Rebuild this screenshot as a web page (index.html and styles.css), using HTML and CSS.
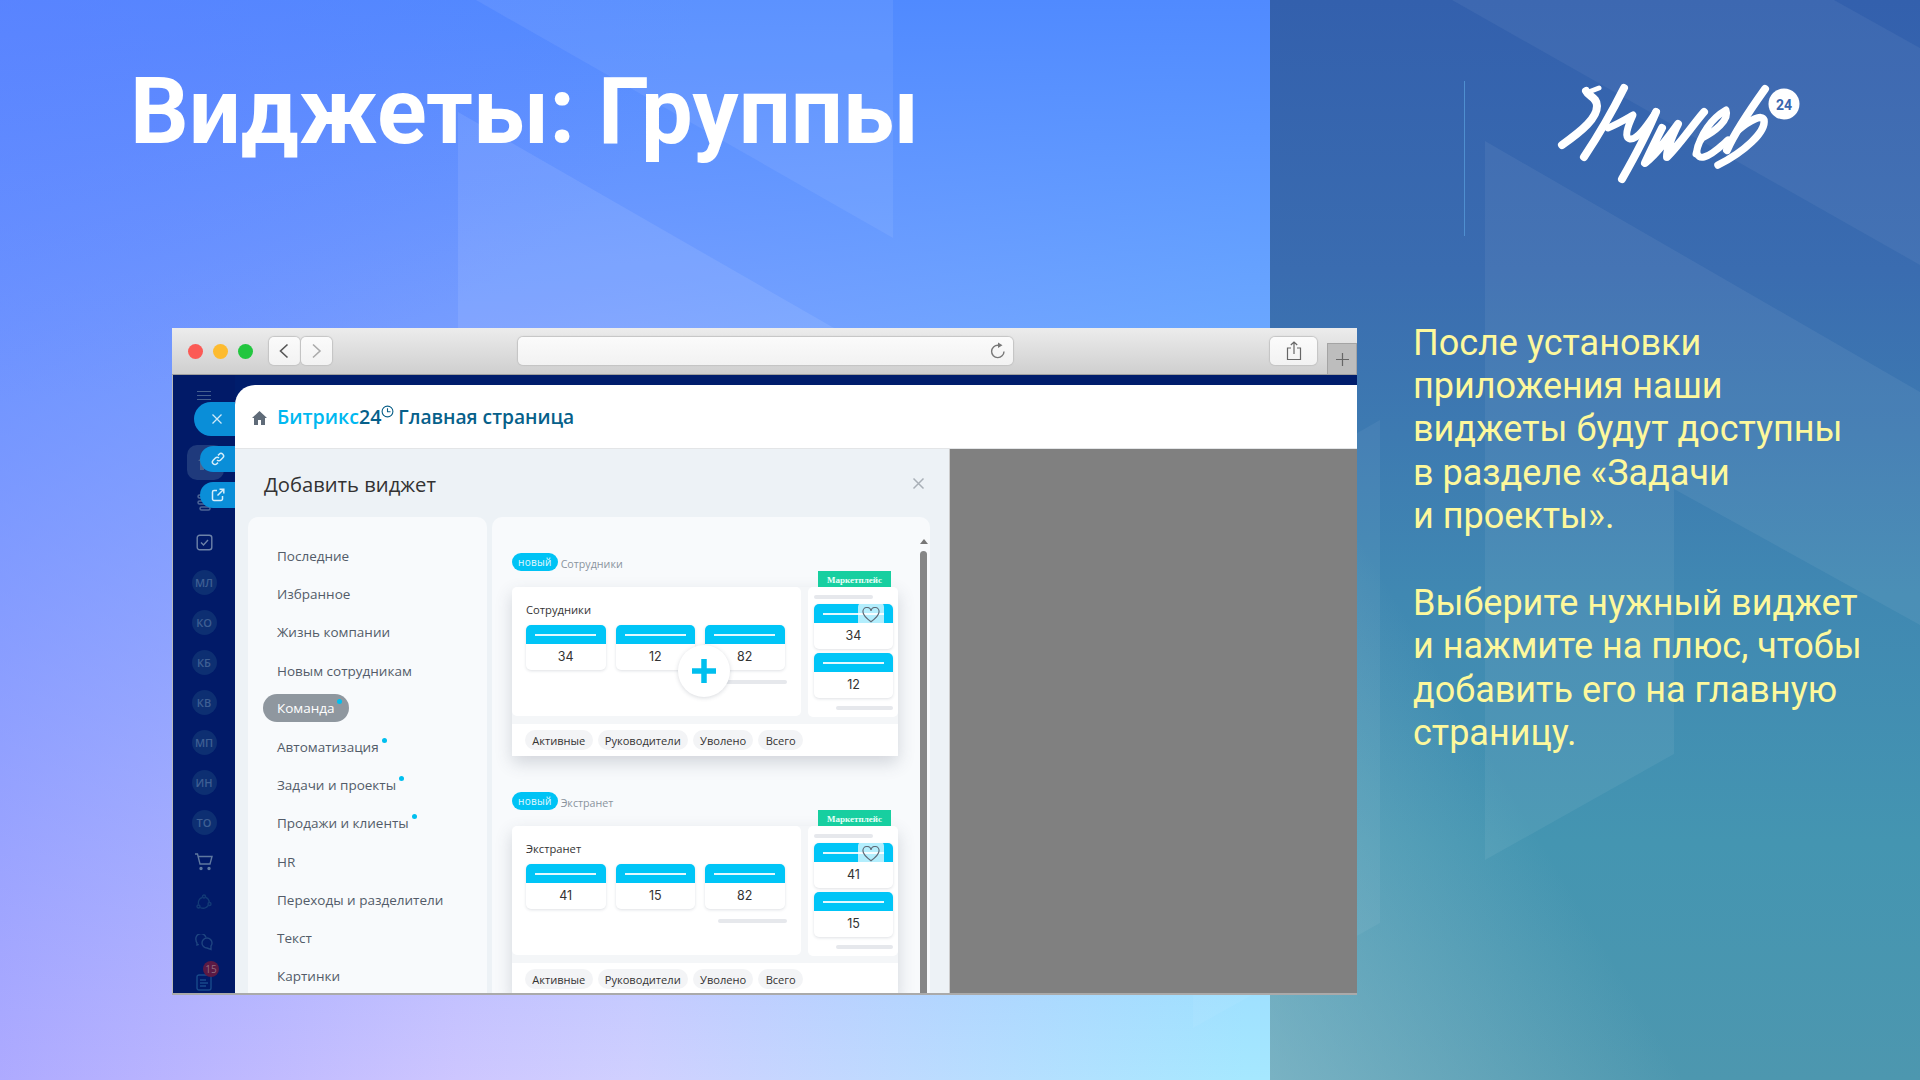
FILE: index.html
```html
<!DOCTYPE html>
<html lang="ru">
<head>
  <meta charset="utf-8">
  <title>Виджеты: Группы</title>
  <link rel="stylesheet" href="styles.css">
</head>
<body>
<div class="slide">

  <svg class="shapes" width="1920" height="1080" viewBox="0 0 1920 1080">
    <polygon points="476,0 893,0 893,238" fill="#fff" opacity=".07"/>
    <polygon points="458,112 834,328 458,328" fill="#fff" opacity=".09"/>
    <polygon points="1193,527 1380,420 1380,923 1193,1028" fill="#fff" opacity=".05"/>
    <polygon points="1452,0 1834,0 1920,48 1920,265" fill="#fff" opacity=".05"/>
    <polygon points="1485,141 1920,392 1920,625 1674,489 1674,754 1485,860" fill="#fff" opacity=".06"/>
  </svg>

  <section class="left">
    <h1 class="title">Виджеты: Группы</h1>

    <div class="browser">
      <div class="toolbar">
        <div class="lights">
          <span class="light red"></span>
          <span class="light yellow"></span>
          <span class="light green"></span>
        </div>
        <div class="nav-btns">
          <span class="tbtn nav-btn">
            <svg width="12" height="16" viewBox="0 0 12 16"><path d="M8.500 1.500 1.500 8l7 6.500" fill="none" stroke="#555" stroke-width="1.6"/></svg>
          </span>
          <span class="tbtn nav-btn">
            <svg width="12" height="16" viewBox="0 0 12 16"><path d="m2 1.5 7 6.5-7 6.5" fill="none" stroke="#aaa" stroke-width="1.6"/></svg>
          </span>
        </div>
        <div class="tbtn address">
          <svg width="18" height="18" viewBox="0 0 18 18"><path d="M9 3.200A6.200 6.200 0 1 0 15 9.500" fill="none" stroke="#777" stroke-width="1.4"/><path d="M9 0.500 13.500 3.200 9 6z" fill="#777"/></svg>
        </div>
        <div class="tbtn share-btn">
          <svg width="16" height="20" viewBox="0 0 16 20"><path d="M5 7H1.5v11.5h13V7H11M8 13V1M4.8 4 8 1l3.2 3" fill="none" stroke="#666" stroke-width="1.2"/></svg>
        </div>
        <div class="new-tab">
          <svg width="15" height="15" viewBox="0 0 15 15"><path d="M7.500 1v13M1 7.500h13" stroke="#666" stroke-width="1.2"/></svg>
        </div>
      </div>

      <div class="app">
        <aside class="sidebar">
          <div class="burger"><i></i><i></i><i></i></div>
          <div class="side-item">
            <span class="home-tile">
              <svg width="16" height="18" viewBox="0 0 16 18"><path d="M8 1 1 8h2v9h4v-5h2v5h4V8h2z" fill="#4a628f"/></svg>
            </span>
          </div>
          <div class="side-item">
            <svg width="16" height="20" viewBox="0 0 16 20" fill="none" stroke="#4d6596" stroke-width="1.5"><rect x="2" y="3" width="10" height="3" rx="1.500"/><rect x="2" y="9" width="10" height="3" rx="1.500"/><rect x="4" y="15" width="10" height="3" rx="1.500"/></svg>
          </div>
          <div class="side-item">
            <svg width="17" height="17" viewBox="0 0 17 17" fill="none" stroke="#6d82a8" stroke-width="1.4"><rect x="1.200" y="1.200" width="14.600" height="14.600" rx="2.500"/><path d="m5 8.500 2.500 2.500 4.500-5"/></svg>
          </div>
          <div class="side-item"><span class="avatar">МЛ</span></div>
          <div class="side-item"><span class="avatar">КО</span></div>
          <div class="side-item"><span class="avatar">КБ</span></div>
          <div class="side-item"><span class="avatar">КВ</span></div>
          <div class="side-item"><span class="avatar">МП</span></div>
          <div class="side-item"><span class="avatar">ИН</span></div>
          <div class="side-item"><span class="avatar">ТО</span></div>
          <div class="side-item">
            <svg width="20" height="18" viewBox="0 0 20 18" fill="none" stroke="#5f789f" stroke-width="1.4"><path d="M1 1h2.500l2.500 10h10l2-7.500H4.200"/><circle cx="7" cy="15.500" r="1" fill="#5f789f"/><circle cx="15" cy="15.500" r="1" fill="#5f789f"/></svg>
          </div>
          <div class="side-item">
            <svg width="16" height="16" viewBox="0 0 16 16" fill="none" stroke="#123a76" stroke-width="1.400"><circle cx="8" cy="2.500" r="1.500"/><circle cx="2.500" cy="12.500" r="1.500"/><circle cx="13.500" cy="10" r="1.500"/><path d="M6 3.500a6 6 0 0 0-3.500 7M9.500 3.200a6 6 0 0 1 3.800 5M4.200 13.500a6 6 0 0 0 8-2"/></svg>
          </div>
          <div class="side-item">
            <svg width="18" height="17" viewBox="0 0 18 17" fill="none" stroke="#1e4480" stroke-width="1.400"><path d="M11 3.500A5 5 0 0 0 1 6c0 1 .3 2 1 3v2l1.800-.7"/><path d="M17 9a5 5 0 1 0-5 5l4 1.500V12a5 5 0 0 0 1-3z"/></svg>
          </div>
          <div class="side-item">
            <span class="doc">
              <svg width="16" height="17" viewBox="0 0 16 17" fill="none" stroke="#184a8a" stroke-width="1.400"><rect x="1" y="1" width="14" height="15" rx="2"/><path d="M4 6h6M4 9h8M4 12h6"/></svg>
              <b class="doc-count">15</b>
            </span>
          </div>

          <span class="pill-btn pill-close">
            <svg width="12" height="12" viewBox="0 0 12 12"><path d="m1.500 1.500 9 9m0-9-9 9" stroke="#cfe9f8" stroke-width="1.300"/></svg>
          </span>
          <span class="pill-btn pill-link">
            <svg width="14" height="14" viewBox="0 0 14 14" fill="none" stroke="#d6eefa" stroke-width="1.500"><path d="M6 8a2.500 2.500 0 0 0 3.600 0l2.200-2.200A2.500 2.500 0 0 0 8.200 2.200L7 3.400"/><path d="M8 6a2.500 2.500 0 0 0-3.600 0L2.200 8.200a2.500 2.500 0 0 0 3.600 3.600L7 10.600"/></svg>
          </span>
          <span class="pill-btn pill-ext">
            <svg width="14" height="14" viewBox="0 0 14 14" fill="none" stroke="#d6eefa" stroke-width="1.500"><path d="M6 2.500H3A1.500 1.500 0 0 0 1.500 4v7A1.500 1.500 0 0 0 3 12.500h7a1.500 1.500 0 0 0 1.500-1.500V8"/><path d="M6.500 7.500 12.500 1.500M8.500 1.200h4.300v4.300"/></svg>
          </span>
        </aside>

        <div class="page">
          <header class="page-head">
            <svg class="home" width="15" height="14" viewBox="0 0 15 14"><path d="M7.500 0 0 7h2v7h4V9h3v5h4V7h2z" fill="#5f6b78"/></svg>
            <span class="brand">Битрикс<em>24</em></span>
            <svg class="brand-clock" width="13" height="13" viewBox="0 0 13 13" fill="none" stroke="#0a5f88" stroke-width="1.100"><circle cx="6.500" cy="6.500" r="5.400"/><path d="M6.500 3.200v3.500H9.500"/></svg>
            <span class="page-name">Главная страница</span>
          </header>

          <div class="page-body">
            <div class="dialog">
              <div class="dialog-head">
                <h2>Добавить виджет</h2>
                <svg width="13" height="13" viewBox="0 0 13 13"><path d="m1.500 1.500 10 10m0-10-10 10" stroke="#a9b0b7" stroke-width="1.500"/></svg>
              </div>
              <div class="dialog-cols">
                <ul class="cats">
                  <li>Последние</li>
                  <li>Избранное</li>
                  <li>Жизнь компании</li>
                  <li>Новым сотрудникам</li>
                  <li><span class="cat-active">Команда<i class="dot"></i></span></li>
                  <li>Автоматизация<i class="dot"></i></li>
                  <li>Задачи и проекты<i class="dot"></i></li>
                  <li>Продажи и клиенты<i class="dot"></i></li>
                  <li>HR</li>
                  <li>Переходы и разделители</li>
                  <li>Текст</li>
                  <li>Картинки</li>
                </ul>

                <div class="catalog">
                  <div class="widgets">

                    <article class="widget">
                      <div class="widget-label"><span class="badge">новый</span>Сотрудники</div>
                      <div class="market-row"><span class="market">Маркетплейс</span></div>
                      <div class="widget-box">
                        <div class="widget-top">
                          <div class="w-main">
                            <div class="w-title">Сотрудники</div>
                            <div class="tiles">
                              <div class="tile"><div class="tile-head"><i></i></div><div class="tile-num">34</div></div>
                              <div class="tile"><div class="tile-head"><i></i></div><div class="tile-num">12</div></div>
                              <div class="tile"><div class="tile-head"><i></i></div><div class="tile-num">82</div></div>
                            </div>
                            <div class="bar bar-main"></div>
                            <span class="add-btn">
                              <svg width="26" height="26" viewBox="0 0 26 26"><path d="M13 1v24M1 13h24" stroke="#00bfee" stroke-width="5.500"/></svg>
                            </span>
                          </div>
                          <div class="w-side">
                            <div class="bar bar-side-top"></div>
                            <div class="tile"><div class="tile-head"><i></i></div><div class="tile-num">34</div></div>
                            <div class="tile"><div class="tile-head"><i></i></div><div class="tile-num">12</div></div>
                            <div class="bar bar-side"></div>
                            <span class="fav">
                              <svg width="18" height="16" viewBox="0 0 18 16"><path d="M9 14.800C4 11 1 8.300 1 5a4 4 0 0 1 8-1 4 4 0 0 1 8 1c0 3.300-3 6-8 9.800z" fill="none" stroke="#5f6b78" stroke-width="1.200"/></svg>
                            </span>
                          </div>
                        </div>
                        <div class="widget-foot">
                          <span>Активные</span><span>Руководители</span><span>Уволено</span><span>Всего</span>
                        </div>
                      </div>
                    </article>

                    <article class="widget">
                      <div class="widget-label"><span class="badge">новый</span>Экстранет</div>
                      <div class="market-row"><span class="market">Маркетплейс</span></div>
                      <div class="widget-box">
                        <div class="widget-top">
                          <div class="w-main">
                            <div class="w-title">Экстранет</div>
                            <div class="tiles">
                              <div class="tile"><div class="tile-head"><i></i></div><div class="tile-num">41</div></div>
                              <div class="tile"><div class="tile-head"><i></i></div><div class="tile-num">15</div></div>
                              <div class="tile"><div class="tile-head"><i></i></div><div class="tile-num">82</div></div>
                            </div>
                            <div class="bar bar-main bar-long"></div>
                          </div>
                          <div class="w-side">
                            <div class="bar bar-side-top"></div>
                            <div class="tile"><div class="tile-head"><i></i></div><div class="tile-num">41</div></div>
                            <div class="tile"><div class="tile-head"><i></i></div><div class="tile-num">15</div></div>
                            <div class="bar bar-side"></div>
                            <span class="fav">
                              <svg width="18" height="16" viewBox="0 0 18 16"><path d="M9 14.800C4 11 1 8.300 1 5a4 4 0 0 1 8-1 4 4 0 0 1 8 1c0 3.300-3 6-8 9.800z" fill="none" stroke="#5f6b78" stroke-width="1.200"/></svg>
                            </span>
                          </div>
                        </div>
                        <div class="widget-foot">
                          <span>Активные</span><span>Руководители</span><span>Уволено</span><span>Всего</span>
                        </div>
                      </div>
                    </article>

                  </div>
                  <div class="scroll"><i class="scroll-up"></i><i class="scroll-thumb"></i></div>
                </div>
              </div>
            </div>
            <div class="overlay"></div>
          </div>
        </div>
      </div>
    </div>
  </section>

  <section class="right">
    <div class="right-head">
      <span class="divider"></span>
      <svg class="logo" width="250" height="110" viewBox="115 20 250 110" fill="none" stroke="#fff" stroke-linecap="round" stroke-linejoin="round">
        <path d="M146 31C149 37 157 37 157 46C157 58 143 70 122 85" stroke-width="8"/>
        <path d="M146 33L159 28" stroke-width="5"/>
        <path d="M184 28C172 52 158 76 144 97" stroke-width="8"/>
        <path d="M168 68C178 64 186 59 193 55C187 68 184 78 190 79C198 80 208 64 216 52" stroke-width="7"/>
        <path d="M216 52C206 76 194 98 182 119" stroke-width="8"/>
        <path d="M222 68C216 80 210 92 205 103C218 92 228 78 238 64C232 76 227 88 227 97C240 84 252 66 264 52" stroke-width="8"/>
        <path d="M256 94C260 74 272 58 286 50C290 60 274 72 262 78C254 90 256 99 264 97C272 95 280 87 288 80" stroke-width="7"/>
        <path d="M325 29C310 50 296 70 287 90" stroke-width="8"/>
        <path d="M298 70C310 60 322 54 324 60C326 72 304 92 278 105" stroke-width="7.500"/>
        <circle cx="344" cy="44" r="15.500" fill="#fff" stroke="none"/>
        <text x="344" y="49.500" class="logo-24" text-anchor="middle">24</text>
      </svg>
    </div>
    <div class="about">
      <p>После установки<br>приложения наши<br>виджеты будут доступны<br>в разделе «Задачи<br>и проекты».</p>
      <p>Выберите нужный виджет<br>и нажмите на плюс, чтобы<br>добавить его на главную<br>страницу.</p>
    </div>
  </section>

</div>
</body>
</html>
```

FILE: styles.css
```css
html, body { margin: 0; padding: 0; }
body { width: 1920px; height: 1080px; overflow: hidden; font-family: "Open Sans", sans-serif; }
h1, h2, p, ul { margin: 0; padding: 0; }
ul { list-style: none; }
i, em { font-style: normal; }

.slide { position: relative; display: flex; width: 1920px; height: 1080px; overflow: hidden; }
.shapes { position: absolute; left: 0; top: 0; z-index: 1; }

/* left part */
.left {
  width: 1270px; flex: none; box-sizing: border-box; padding: 53px 0 0 130px;
  background:
    radial-gradient(700px 400px at 0 0, rgba(105,120,255,.35), rgba(105,120,255,0)),
    linear-gradient(180deg, #508aff 0%, rgba(80,138,255,0) 100%),
    linear-gradient(90deg, #aeaaff 0%, #cdc6ff 36%, #d0d0ff 50%, #a6e8ff 98%);
}
.title {
  position: relative; z-index: 2; height: 118px; margin-bottom: 157px;
  font: 700 92px/118px Roboto, sans-serif; color: #fff; white-space: nowrap;
}

/* browser window */
.browser {
  position: relative; z-index: 3; display: flex; flex-direction: column;
  width: 1185px; height: 667px; margin-left: 42px; overflow: hidden;
  border-bottom: 2px solid #aaa; box-sizing: border-box;
}
.toolbar {
  display: flex; align-items: flex-start; flex: none; height: 47px; box-sizing: border-box;
  padding: 9px 0 0 16px; background: linear-gradient(#ececec, #cfcfcf); border-bottom: 1px solid #9f9f9f;
}
.lights { display: flex; gap: 10px; padding-top: 7px; margin-right: 16px; }
.light { width: 15px; height: 15px; border-radius: 50%; }
.red { background: #fb5a55; }
.yellow { background: #fdbb2f; }
.green { background: #22c63f; }
.tbtn {
  display: flex; align-items: center; justify-content: center; box-sizing: border-box; height: 28px;
  background: linear-gradient(#fbfbfb, #f2f2f2); border-radius: 5px; box-shadow: 0 0 1px 1px #c4c4c4;
}
.nav-btns { display: flex; gap: 1px; margin-right: 186px; }
.nav-btn { width: 31px; }
.address { width: 496px; justify-content: flex-end; padding-right: 6px; margin-right: 257px; }
.share-btn { width: 47px; margin-right: 10px; }
.new-tab {
  display: flex; align-items: center; justify-content: center; width: 30px; height: 31px; margin-top: 6px;
  box-sizing: border-box; background: #bdbdbd; border: 1px solid #a4a4a4; border-bottom: 0;
}

.app { position: relative; display: flex; flex: 1; min-height: 0; background: #001d6c; border-left: 1px solid #b9b9b9; }

/* dark sidebar */
.sidebar { position: relative; width: 62px; flex: none; padding-top: 2px; background: #011a68; }
.burger { display: flex; flex-direction: column; gap: 3px; width: 14px; height: 40px; margin: 0 auto 25px; padding-top: 14px; box-sizing: border-box; }
.burger i { height: 1px; background: #46608f; }
.side-item { display: flex; align-items: center; justify-content: center; height: 40px; }
.home-tile { display: flex; align-items: center; justify-content: center; width: 37px; height: 35px; margin-left: 2px; border-radius: 10px; background: #1f3a7c; }
.avatar {
  width: 25px; height: 25px; border-radius: 50%; background: #0d2f72; color: #3f5f94;
  font: 600 11px/25px "Open Sans", sans-serif; text-align: center;
}
.doc { position: relative; display: block; width: 16px; height: 17px; }
.doc-count {
  position: absolute; left: 7px; top: -13px; width: 16px; height: 16px; border-radius: 50%;
  background: #5b1a44; color: #8f6a80; font: 400 10px/16px "Open Sans", sans-serif; text-align: center;
}
.pill-btn { position: absolute; right: 0; display: flex; align-items: center; justify-content: center; background: #0a8ed8; border-radius: 17px 0 0 17px; }
.pill-close { top: 27px; width: 41px; height: 34px; box-sizing: border-box; padding-left: 5px; }
.pill-link { top: 71px; width: 35px; height: 26px; }
.pill-ext { top: 107px; width: 35px; height: 26px; }

/* page */
.page { flex: 1; display: flex; flex-direction: column; min-width: 0; margin-top: 10px; background: #fff; border-radius: 20px 0 0 0; overflow: hidden; }
.page-head {
  display: flex; align-items: center; flex: none; height: 64px; box-sizing: border-box; padding: 0 0 0 17px;
  border-bottom: 1px solid #e3e5e7; font: 600 19.200px "Open Sans", sans-serif; color: #06608a;
}
.home { margin-right: 10px; margin-top: 2px; }
.brand { color: #00b8f0; font-size: 19.600px; }
.brand em { color: #06608a; }
.brand-clock { margin: -10px 4px 0 0; }

.page-body { flex: 1; display: flex; min-height: 0; }
.overlay { flex: 1; background: #808080; border-left: 1px solid #ccc; }

/* dialog */
.dialog { display: flex; flex-direction: column; width: 714px; flex: none; background: #edf2f6; }
.dialog-head { display: flex; align-items: center; justify-content: space-between; flex: none; height: 68px; box-sizing: border-box; padding: 1px 24px 0 29px; }
.dialog-head h2 { font: 400 20.200px "Open Sans", sans-serif; color: #333; }
.dialog-cols { display: flex; flex: 1; gap: 5px; min-height: 0; padding: 0 19px 0 13px; }

.cats { width: 239px; flex: none; box-sizing: border-box; padding: 20px 0 0 29px; background: #f8fafc; border-radius: 10px 10px 0 0; }
.cats li { height: 38.200px; font: 400 13.500px/38.200px "Open Sans", sans-serif; color: #535c69; white-space: nowrap; }
.cat-active { display: inline-block; height: 28px; margin-left: -14px; padding: 0 14px; border-radius: 14px; background: #8f979f; color: #fff; line-height: 28px; vertical-align: 1px; }
.dot { display: inline-block; width: 5px; height: 5px; margin-left: 3px; border-radius: 50%; background: #00bfef; vertical-align: 9px; }
.cat-active .dot { margin-left: 2px; margin-right: -7px; }

.catalog { display: flex; flex: 1; min-width: 0; background: #f8fafc; border-radius: 10px 10px 0 0; overflow: hidden; }
.widgets { flex: 1; min-width: 0; padding: 36px 0 0 20px; }
.widget { width: 386px; margin-bottom: 36px; }
.widget-label { display: flex; align-items: center; height: 18px; font: 400 10.700px "Open Sans", sans-serif; color: #8a949e; padding-top: 3px; box-sizing: border-box; }
.badge { height: 18px; margin: -3px 3px 0 0; padding: 0 6px; border-radius: 9px; background: #00c3f5; color: #e5f8fd; font-size: 10px; line-height: 19px; letter-spacing: .3px; }
.market-row { display: flex; justify-content: flex-end; height: 16px; padding-right: 7px; }
.market { width: 73px; height: 16px; background: #17cfa0; color: #e8fff8; font: 700 9px/18px "Liberation Serif", serif; text-align: center; }

.widget-box { background: #f4f6f8; box-shadow: 0 7px 16px rgba(60,70,90,.2); }
.widget-top { display: flex; justify-content: space-between; height: 129px; }
.w-main { position: relative; width: 289px; box-sizing: border-box; padding: 16px 14px 0; background: #fff; border-radius: 5px; }
.w-side { position: relative; width: 90px; height: 130px; box-sizing: border-box; padding: 8px 5px 0 6px; background: #fff; border-radius: 5px; }
.w-title { height: 14px; margin-bottom: 8px; font: 400 11.200px/14px "Open Sans", sans-serif; color: #333; }
.tiles { display: flex; gap: 10px; }
.tile { width: 79.500px; height: 45px; flex: none; background: #fff; border-radius: 5px; box-shadow: 0 1px 3px rgba(80,90,110,.18); overflow: hidden; }
.tile-head { display: flex; align-items: center; justify-content: center; height: 19px; background: #00c5f7; }
.tile-head i { width: 61px; height: 2px; background: #e4f8fe; }
.tile-num { height: 26px; font: 400 12.500px/25px Inter, sans-serif; color: #333; text-align: center; }
.w-side .tile { width: 79px; margin-top: 4px; }
.bar { height: 4px; border-radius: 2px; background: #e6e8ec; }
.bar-main { width: 62px; margin: 10px 0 0 auto; }
.bar-long { width: 69px; }
.bar-side-top { width: 59px; margin-bottom: 5px; }
.bar-side { width: 57px; margin: 8px 0 0 auto; }
.w-side .bar-side-top + .tile { margin-top: 0; }
.add-btn {
  position: absolute; left: 166px; top: 58px; display: flex; align-items: center; justify-content: center;
  width: 52px; height: 52px; border-radius: 50%; background: #fff; box-shadow: 0 1px 4px rgba(60,70,90,.2);
}
.fav {
  position: absolute; left: 50px; top: 15px; display: flex; align-items: center; justify-content: center;
  width: 26px; height: 26px; border-radius: 5px; background: rgba(255,255,255,.7);
}
.widget-foot { display: flex; gap: 5px; height: 32px; margin-top: 8px; box-sizing: border-box; padding: 6px 13px 0; background: #fff; }
.widget-foot span { height: 19px; padding: 1px 7.200px 0; border-radius: 10px; background: #f3f4f6; font: 400 11.100px/19px "Open Sans", sans-serif; color: #333; white-space: nowrap; }

.scroll { display: flex; flex-direction: column; align-items: center; width: 7px; flex: none; margin-right: 3px; padding-top: 22px; }
.scroll-up { width: 0; height: 0; border: 4px solid transparent; border-top: 0; border-bottom: 5px solid #777; margin-bottom: 7px; }
.scroll-thumb { flex: 1; width: 7px; background: #868686; border-radius: 4px 4px 0 0; }

/* right part */
.right {
  flex: 1; box-sizing: border-box; padding: 81px 0 0 194px;
  background:
    linear-gradient(to top right, rgba(165,205,215,.5) 0%, rgba(165,205,215,0) 32%),
    linear-gradient(180deg, #3360ad 0%, #3a6cb0 25%, #4088b2 55%, #4495b1 78%, #4d97af 100%);
}
.right-head { position: relative; z-index: 2; display: flex; align-items: flex-start; gap: 90px; height: 155px; }
.divider { width: 1px; height: 155px; background: #4f8fd0; }
.logo { margin-top: -1px; }
.logo-24 { font: 700 14px Roboto, sans-serif; fill: #3a66ae; stroke: none; }
.about { position: relative; z-index: 2; margin: 85.500px 0 0 -51px; width: 500px; font: 400 36px/43.400px Roboto, sans-serif; color: #fdf89c; white-space: nowrap; }
.about p + p { margin-top: 43.400px; }
```
